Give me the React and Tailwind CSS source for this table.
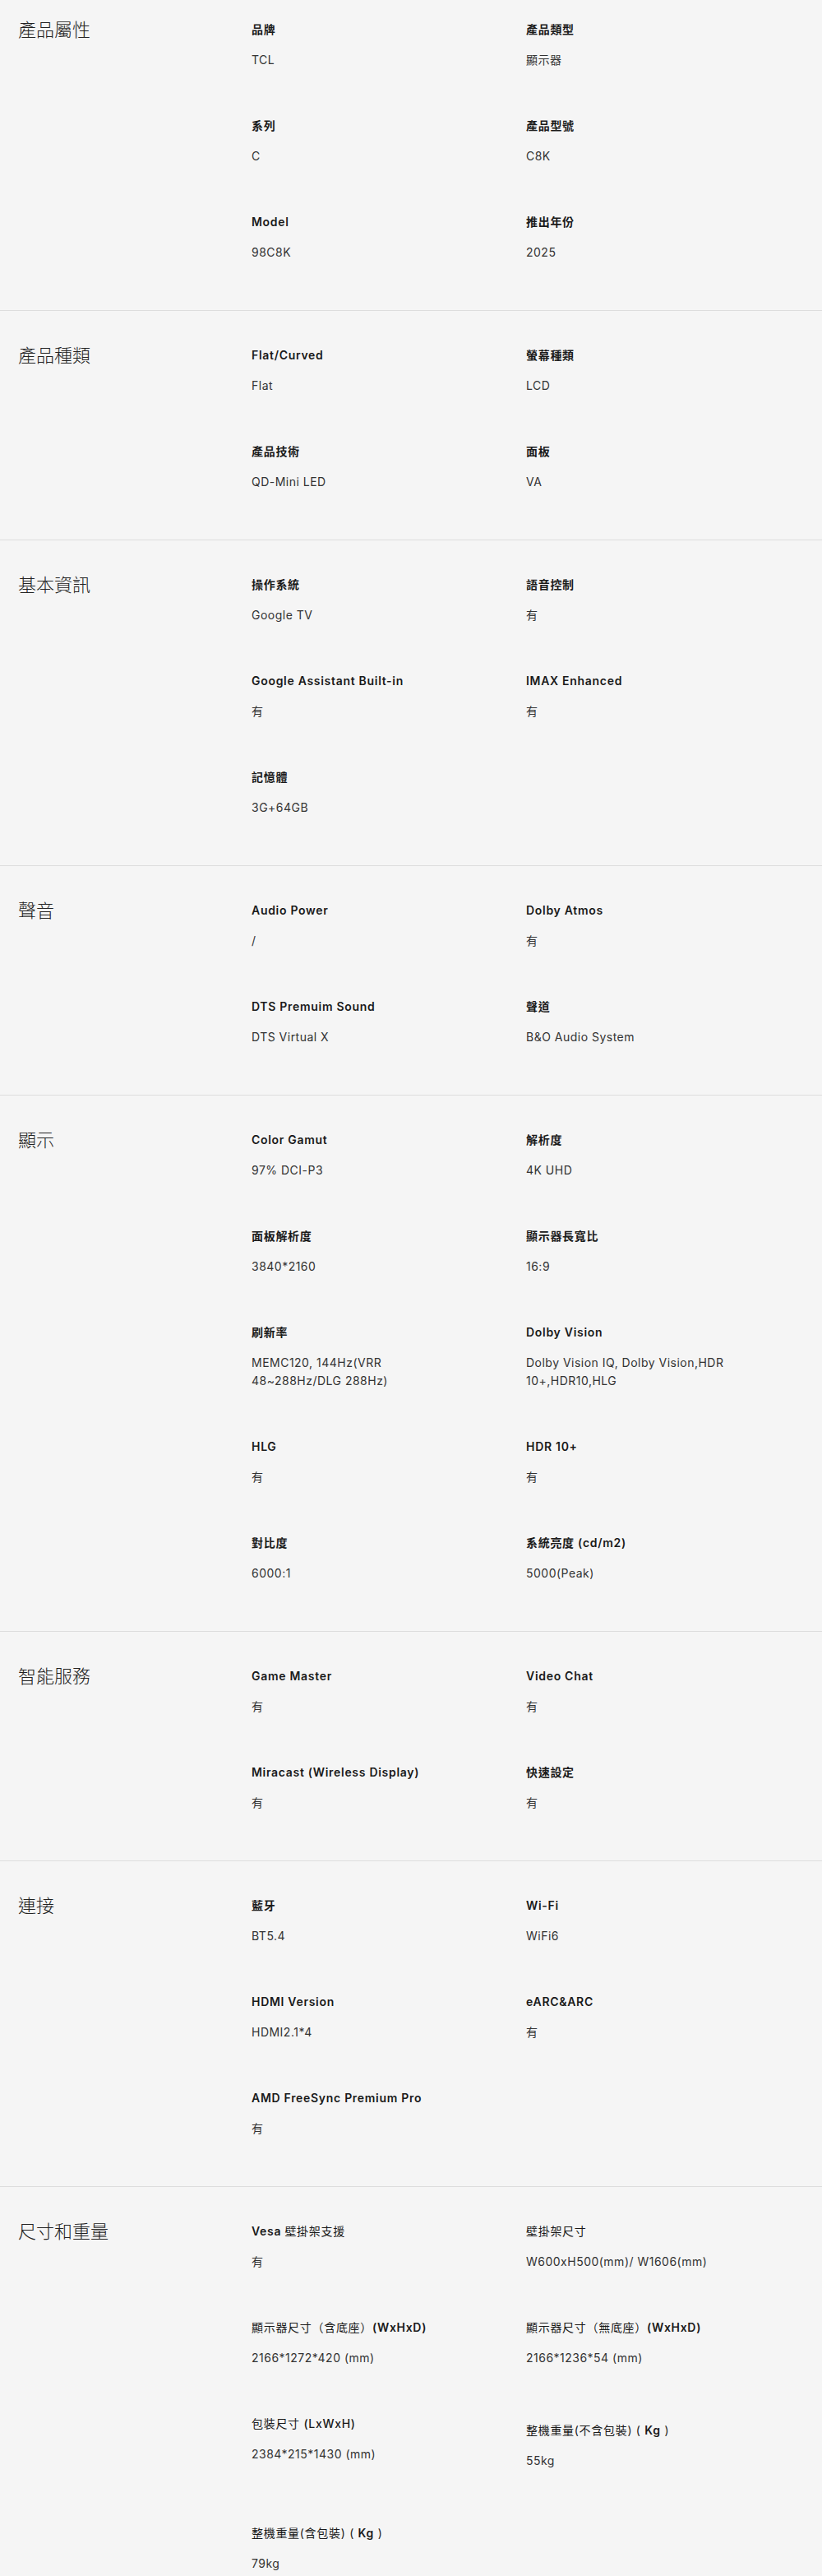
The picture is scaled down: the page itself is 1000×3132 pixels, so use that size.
import React from 'react';

const sections = [
  {
    title: '產品屬性',
    first: true,
    items: [
      { label: '品牌', value: 'TCL' },
      { label: '產品類型', value: '顯示器' },
      { label: '系列', value: 'C' },
      { label: '產品型號', value: 'C8K' },
      { label: 'Model', value: '98C8K' },
      { label: '推出年份', value: '2025' },
    ],
  },
  {
    title: '產品種類',
    items: [
      { label: 'Flat/Curved', value: 'Flat' },
      { label: '螢幕種類', value: 'LCD' },
      { label: '產品技術', value: 'QD-Mini LED' },
      { label: '面板', value: 'VA' },
    ],
  },
  {
    title: '基本資訊',
    items: [
      { label: '操作系統', value: 'Google TV' },
      { label: '語音控制', value: '有' },
      { label: 'Google Assistant Built-in', value: '有' },
      { label: 'IMAX Enhanced', value: '有' },
      { label: '記憶體', value: '3G+64GB' },
    ],
  },
  {
    title: '聲音',
    items: [
      { label: 'Audio Power', value: '/' },
      { label: 'Dolby Atmos', value: '有' },
      { label: 'DTS Premuim Sound', value: 'DTS Virtual X' },
      { label: '聲道', value: 'B&O Audio System' },
    ],
  },
  {
    title: '顯示',
    items: [
      { label: 'Color Gamut', value: '97% DCI-P3' },
      { label: '解析度', value: '4K UHD' },
      { label: '面板解析度', value: '3840*2160' },
      { label: '顯示器長寬比', value: '16:9' },
      { label: '刷新率', value: ['MEMC120, 144Hz(VRR', '48~288Hz/DLG 288Hz)'] },
      { label: 'Dolby Vision', value: ['Dolby Vision IQ, Dolby Vision,HDR', '10+,HDR10,HLG'] },
      { label: 'HLG', value: '有' },
      { label: 'HDR 10+', value: '有' },
      { label: '對比度', value: '6000:1' },
      { label: '系統亮度 (cd/m2)', value: '5000(Peak)' },
    ],
  },
  {
    title: '智能服務',
    items: [
      { label: 'Game Master', value: '有' },
      { label: 'Video Chat', value: '有' },
      { label: 'Miracast (Wireless Display)', value: '有' },
      { label: '快速設定', value: '有' },
    ],
  },
  {
    title: '連接',
    items: [
      { label: '藍牙', value: 'BT5.4' },
      { label: 'Wi-Fi', value: 'WiFi6' },
      { label: 'HDMI Version', value: 'HDMI2.1*4' },
      { label: 'eARC&ARC', value: '有' },
      { label: 'AMD FreeSync Premium Pro', value: '有' },
    ],
  },
  {
    title: '尺寸和重量',
    items: [
      {
        label: (
          <>
            Vesa <span className="font-normal">壁掛架支援</span>
          </>
        ),
        value: '有',
      },
      { label: <span className="font-normal">壁掛架尺寸</span>, value: 'W600xH500(mm)/ W1606(mm)' },
      {
        label: (
          <>
            <span className="font-normal">顯示器尺寸（含底座）</span>(WxHxD)
          </>
        ),
        value: '2166*1272*420 (mm)',
      },
      {
        label: (
          <>
            <span className="font-normal">顯示器尺寸（無底座）</span>(WxHxD)
          </>
        ),
        value: '2166*1236*54 (mm)',
      },
      {
        label: (
          <>
            <span className="font-normal">包裝尺寸 </span>
            <span className="font-medium">(LxWxH)</span>
          </>
        ),
        value: '2384*215*1430 (mm)',
      },
      {
        label: (
          <>
            <span className="font-normal">整機重量(不含包裝) ( </span>Kg<span className="font-normal"> )</span>
          </>
        ),
        value: '55kg',
        shift: true,
      },
      {
        label: (
          <>
            <span className="font-normal">整機重量(含包裝) ( </span>Kg<span className="font-normal"> )</span>
          </>
        ),
        value: '79kg',
        shift: true,
      },
    ],
  },
];

const SpecItem = ({ item }) => {
  const lines = Array.isArray(item.value) ? item.value : [item.value];
  return (
    <div className={item.shift ? 'mb-[59px] pt-[8px]' : 'mb-[59px]'}>
      <div className="text-[14px] leading-[20px] font-semibold text-[#1a1a1a] tracking-[0.05em]">{item.label}</div>
      <div className="mt-[16px] text-[14px] leading-[22px] text-[#333333] tracking-[0.035em]">
        {lines.map((line, i) => (
          <div key={i}>{line}</div>
        ))}
      </div>
    </div>
  );
};

const SpecSection = ({ section }) => (
  <div className={`flex border-b border-[#dddddd] ${section.first ? 'pt-[26px]' : 'pt-[44px]'}`}>
    <div className="w-[306px] shrink-0 pl-[22px]">
      <h2 className="-mt-[5px] text-[22px] leading-[30px] font-light text-[#222222]">{section.title}</h2>
    </div>
    <div className="grid grid-cols-[334px_334px] items-start">
      {section.items.map((item, i) => (
        <SpecItem key={i} item={item} />
      ))}
    </div>
  </div>
);

export default function App() {
  return (
    <div
      className="min-h-[3132px] w-[1000px] bg-[#f5f5f5]"
      style={{ fontFamily: 'Inter, "Noto Sans CJK TC", sans-serif' }}
    >
      {sections.map((section, i) => (
        <SpecSection key={i} section={section} />
      ))}
    </div>
  );
}
